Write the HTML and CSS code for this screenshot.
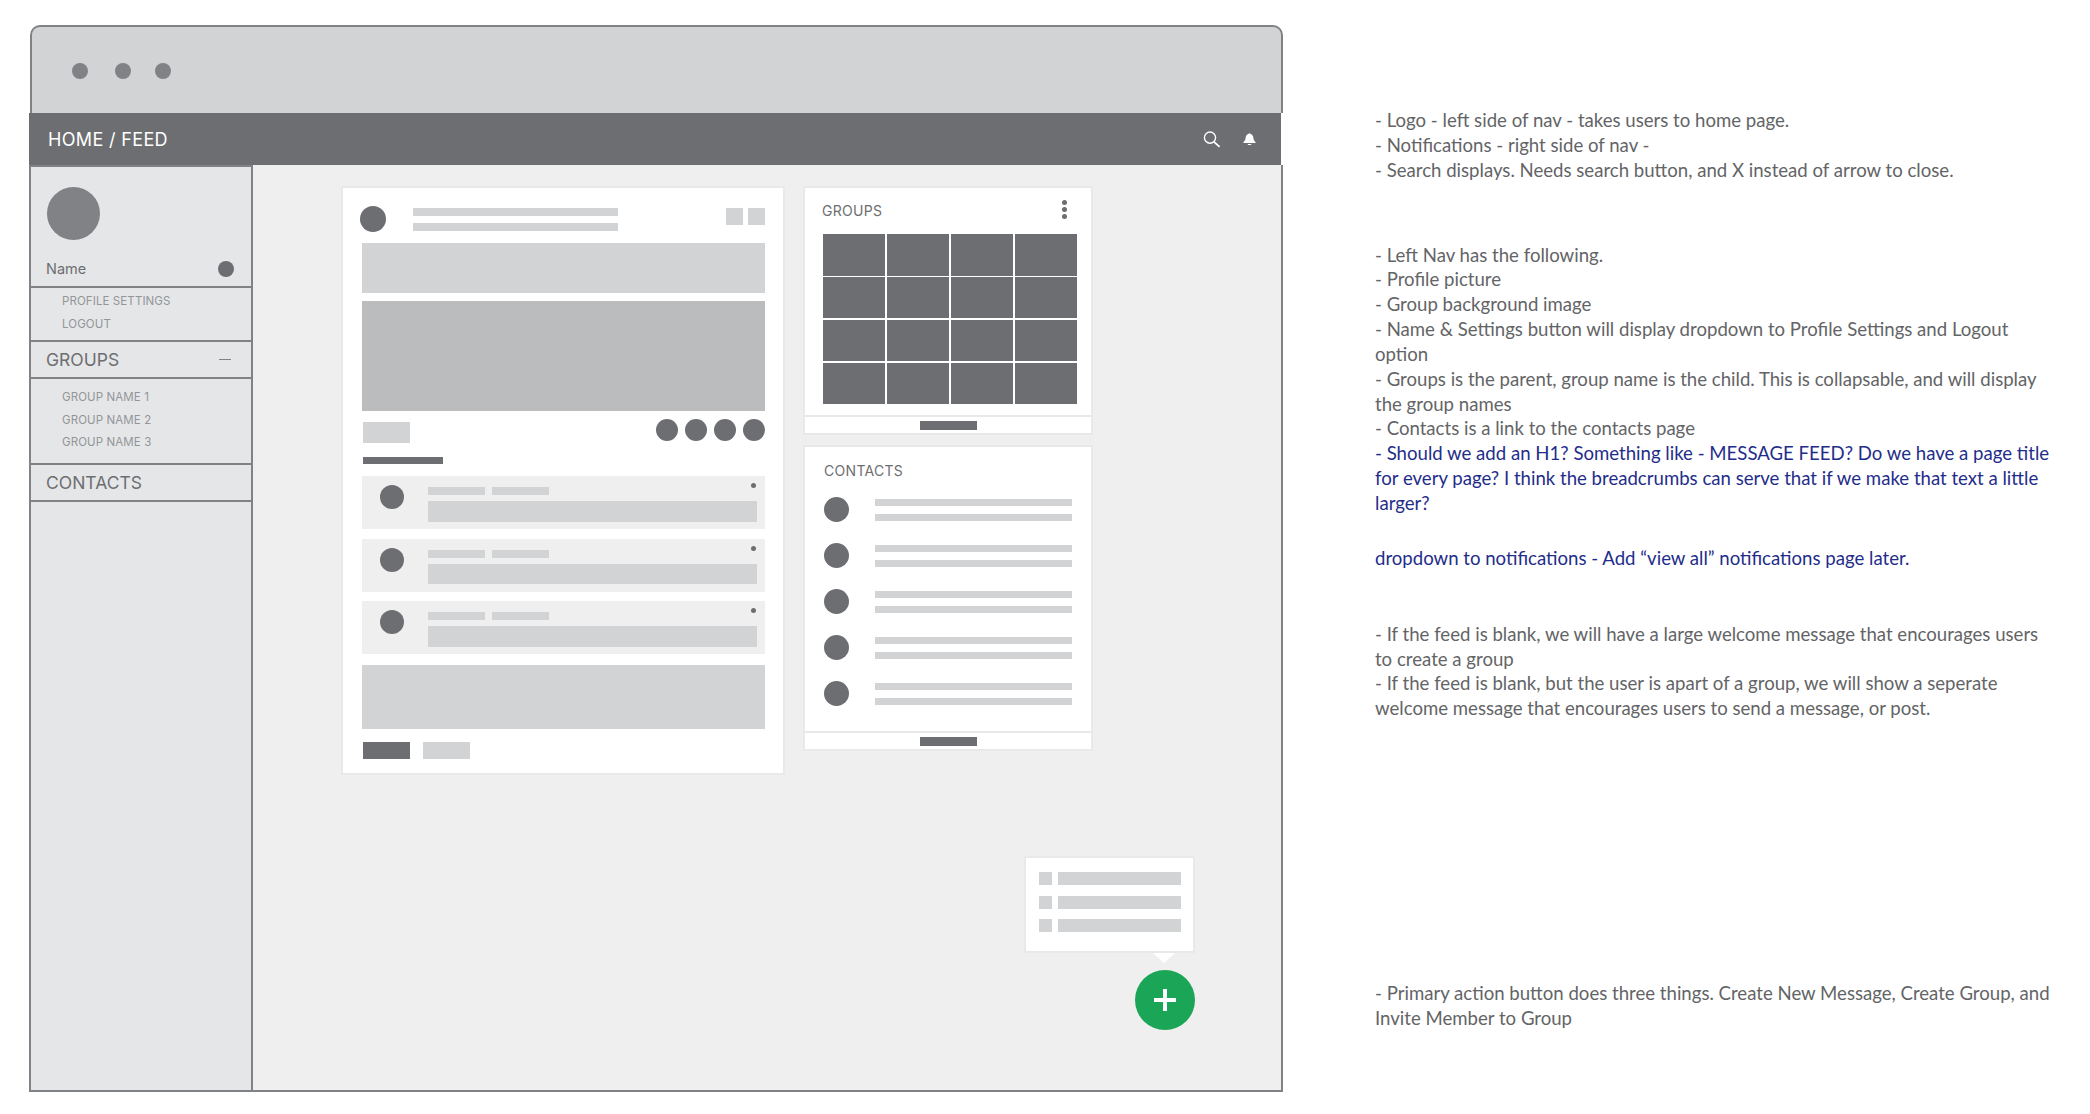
FILE: index.html
```html
<!DOCTYPE html>
<html lang="en">
<head>
	<meta charset="UTF-8">
	<title>Home / Feed wireframe</title>
	<link rel="stylesheet" href="styles.css">
</head>
<body>
	<div class="page">
		<div class="window">
			<div class="titlebar">
				<span class="win-dot"></span>
				<span class="win-dot second"></span>
				<span class="win-dot third"></span>
			</div>
			<div class="topnav">
				<span class="crumbs">HOME / FEED</span>
				<svg class="icon-search" width="18" height="17" viewBox="0 0 18 17"><circle cx="7" cy="6.6" r="5.6" fill="none" stroke="#fff" stroke-width="1.4"/><path d="M11 10.8l5.6 5" fill="none" stroke="#fff" stroke-width="1.8"/></svg>
				<svg class="icon-bell" width="13" height="12" viewBox="0 0 13 12"><path d="M6.5 0.2c.6 0 1 .4 1.1.9 1.8.5 2.6 2 2.8 3.8.2 1.800.8 3 2.1 4.100v1H.5V9c1.300-1.100 1.900-2.300 2.100-4.100.2-1.800 1-3.300 2.800-3.800.1-.5.500-.9 1.100-.9z" fill="#fff"/><path d="M4.800 11h3.400v1H4.800z" fill="#fff"/></svg>
			</div>
			<div class="body-row">
				<div class="sidebar">
					<div class="profile">
						<div class="profile-pic"></div>
						<div class="name-row"><span>Name</span><i class="name-dot"></i></div>
					</div>
					<div class="submenu profile-menu">
						<a>PROFILE SETTINGS</a>
						<a>LOGOUT</a>
					</div>
					<div class="nav-head"><span>GROUPS</span><i class="minus"></i></div>
					<div class="submenu group-menu">
						<a>GROUP NAME 1</a>
						<a>GROUP NAME 2</a>
						<a>GROUP NAME 3</a>
					</div>
					<div class="nav-head"><span>CONTACTS</span></div>
				</div>
				<div class="main">
					<div class="card feed">
						<div class="post-head">
							<div class="post-avatar"></div>
							<div class="post-lines"><div></div><div></div></div>
							<div class="post-tools"><div></div><div></div></div>
						</div>
						<div class="block b1"></div>
						<div class="block b2"></div>
						<div class="post-actions">
							<div class="like"></div>
							<div class="faces"><i></i><i></i><i></i><i></i></div>
						</div>
						<div class="divider-bar"></div>
						<div class="comments">
							<div class="comment">
								<div class="c-avatar"></div>
								<div class="c-body">
									<div class="c-meta"><div></div><div></div><i></i></div>
									<div class="c-text"></div>
								</div>
							</div>
							<div class="comment">
								<div class="c-avatar"></div>
								<div class="c-body">
									<div class="c-meta"><div></div><div></div><i></i></div>
									<div class="c-text"></div>
								</div>
							</div>
							<div class="comment">
								<div class="c-avatar"></div>
								<div class="c-body">
									<div class="c-meta"><div></div><div></div><i></i></div>
									<div class="c-text"></div>
								</div>
							</div>
						</div>
						<div class="block b3"></div>
						<div class="post-btns"><div class="btn-dark"></div><div class="btn-light"></div></div>
					</div>
					<div class="side-cards">
						<div class="card groups-card">
							<div class="card-title">
								<span>GROUPS</span>
								<div class="more"><i></i><i></i><i></i></div>
							</div>
							<div class="tile-grid">
								<div></div><div></div><div></div><div></div>
								<div></div><div></div><div></div><div></div>
								<div></div><div></div><div></div><div></div>
								<div></div><div></div><div></div><div></div>
							</div>
							<div class="card-foot"><div></div></div>
						</div>
						<div class="card contacts-card">
							<div class="card-title contacts-title"><span>CONTACTS</span></div>
							<div class="contact-list">
								<div class="contact"><i></i><div class="contact-lines"><div></div><div></div></div></div>
								<div class="contact"><i></i><div class="contact-lines"><div></div><div></div></div></div>
								<div class="contact"><i></i><div class="contact-lines"><div></div><div></div></div></div>
								<div class="contact"><i></i><div class="contact-lines"><div></div><div></div></div></div>
								<div class="contact"><i></i><div class="contact-lines"><div></div><div></div></div></div>
							</div>
							<div class="card-foot"><div></div></div>
						</div>
					</div>
					<div class="popup">
						<div class="popup-row"><i></i><div></div></div>
						<div class="popup-row"><i></i><div></div></div>
						<div class="popup-row"><i></i><div></div></div>
					</div>
					<div class="fab">
						<svg width="22" height="22" viewBox="0 0 22 22"><path d="M11 0v22M0 11h22" stroke="#fff" stroke-width="4"/></svg>
					</div>
				</div>
			</div>
		</div>
		<div class="notes">
			<p class="n1">- Logo - left side of nav - takes users to home page.<br>
			- Notifications - right side of nav -<br>
			- Search displays. Needs search button, and X instead of arrow to close.</p>
			<p class="n2">- Left Nav has the following.<br>
			- Profile picture<br>
			- Group background image<br>
			- Name &amp; Settings button will display dropdown to Profile Settings and Logout option<br>
			- Groups is the parent, group name is the child. This is collapsable, and will display the group names<br>
			- Contacts is a link to the contacts page<br>
			<span class="blue">- Should we add an H1? Something like - MESSAGE FEED? Do we have a page title for every page? I think the breadcrumbs can serve that if we make that text a little larger?</span></p>
			<p class="n3 blue">dropdown to notifications - Add “view all” notifications page later.</p>
			<p class="n4">- If the feed is blank, we will have a large welcome message that encourages users to create a group<br>
			- If the feed is blank, but the user is apart of a group, we will show a seperate welcome message that encourages users to send a message, or post.</p>
			<p class="n5">- Primary action button does three things. Create New Message, Create Group, and Invite Member to Group</p>
		</div>
	</div>
</body>
</html>
```

FILE: styles.css
```css
*{
	margin:0;
	padding:0;
	box-sizing:border-box;
}
body{
	background:#fff;
	font-family:"Lato","Liberation Sans",sans-serif;
	overflow:hidden;
}
i{
	display:block;
}
.page{
	display:flex;
	padding:25px 0 0 29px;
}

/* window frame */
.window{
	width:1254px;
	height:1067px;
	display:flex;
	flex-direction:column;
	flex:none;
}
.titlebar{
	height:88px;
	margin-left:1px;
	background:#d1d3d4;
	border:2px solid #808285;
	border-bottom:0;
	border-radius:10px 10px 0 0;
	display:flex;
	align-items:center;
	padding:1px 0 0 40px;
}
.win-dot{
	width:16px;
	height:16px;
	border-radius:50%;
	background:#808285;
}
.win-dot.second{
	margin-left:27px;
}
.win-dot.third{
	margin-left:24px;
}
.topnav{
	height:52px;
	margin-right:2px;
	background:#6d6e71;
	display:flex;
	align-items:center;
	padding:0 25px 0 19px;
}
.crumbs{
	font-family:"Inter","Liberation Sans",sans-serif;
	font-size:18px;
	color:#fff;
	letter-spacing:.35px;
}
.icon-search{
	margin-left:auto;
	margin-top:1px;
}
.icon-bell{
	margin-left:22px;
}
.body-row{
	flex:1;
	display:flex;
	min-height:0;
}

/* left nav */
.sidebar{
	width:224px;
	background:#e5e6e8;
	border:2px solid #808285;
	font-family:"Inter","Liberation Sans",sans-serif;
}
.profile{
	height:121px;
	padding:20px 16px 0 16px;
	border-bottom:2px solid #808285;
}
.profile-pic{
	width:53px;
	height:53px;
	border-radius:50%;
	background:#808285;
}
.name-row{
	display:flex;
	align-items:center;
	justify-content:space-between;
	margin-top:20px;
	padding-right:1px;
	font-size:14.500px;
	color:#6d6e71;
}
.name-row span{
	margin-left:-1px;
}
.name-dot{
	width:16px;
	height:16px;
	border-radius:50%;
	background:#6d6e71;
}
.submenu{
	padding-left:31px;
	border-bottom:2px solid #808285;
	font-size:11.500px;
	letter-spacing:.1px;
	color:#939598;
	display:flex;
	flex-direction:column;
}
.profile-menu{
	height:54px;
	padding-top:6px;
	gap:9px;
}
.group-menu{
	height:86px;
	padding-top:11px;
	gap:8.500px;
}
.nav-head{
	height:37px;
	padding:0 20px 0 15px;
	border-bottom:2px solid #808285;
	display:flex;
	align-items:center;
	justify-content:space-between;
	font-size:17.500px;
	color:#6d6e71;
}
.minus{
	width:12px;
	height:1.500px;
	background:#808285;
}

/* content area */
.main{
	flex:1;
	position:relative;
	background:#efefef;
	border-right:2px solid #808285;
	border-bottom:2px solid #808285;
	padding:21px 0 0 88px;
	display:flex;
	align-items:flex-start;
	gap:18px;
}
.card{
	background:#fff;
	border:2px solid #e9e9ea;
}
.feed{
	width:444px;
	height:589px;
	padding:18px 18px 0 19px;
}
.post-head{
	display:flex;
	height:26px;
}
.post-avatar{
	width:26px;
	height:26px;
	margin-left:-2px;
	border-radius:50%;
	background:#6d6e71;
}
.post-lines{
	width:205px;
	margin:2px 0 0 27px;
	display:flex;
	flex-direction:column;
	gap:7px;
}
.post-lines div{
	height:8px;
	background:#d1d3d4;
}
.post-tools{
	margin:2px 0 0 auto;
	display:flex;
	gap:5px;
}
.post-tools div{
	width:17px;
	height:17px;
	background:#d1d3d4;
}
.block{
	background:#d1d3d4;
}
.b1{
	height:50px;
	margin-top:11px;
}
.b2{
	height:110px;
	margin-top:8px;
	background:#bbbcbe;
}
.post-actions{
	display:flex;
	justify-content:space-between;
	height:24px;
	margin-top:8px;
}
.like{
	width:47px;
	height:21px;
	margin:3px 0 0 1px;
	background:#d1d3d4;
}
.faces{
	display:flex;
	gap:7px;
}
.faces i{
	width:22px;
	height:22px;
	border-radius:50%;
	background:#6d6e71;
}
.divider-bar{
	width:80px;
	height:7px;
	margin:14px 0 0 1px;
	background:#6d6e71;
}
.comments{
	margin-top:12px;
	display:flex;
	flex-direction:column;
	gap:9.500px;
}
.comment{
	height:53px;
	background:#efefef;
	padding:9px 8px 0 18px;
	display:flex;
}
.c-avatar{
	width:24px;
	height:24px;
	border-radius:50%;
	background:#6d6e71;
}
.c-body{
	flex:1;
	margin-left:24px;
}
.c-meta{
	display:flex;
	gap:7px;
	height:8px;
	margin-top:2px;
}
.c-meta div{
	width:57px;
	background:#d1d3d4;
}
.c-meta i{
	width:5px;
	height:5px;
	margin:-4px 1px 0 auto;
	border-radius:50%;
	background:#6d6e71;
}
.c-text{
	height:20.500px;
	margin-top:6px;
	background:#d1d3d4;
}
.b3{
	height:63.500px;
	margin-top:11px;
}
.post-btns{
	display:flex;
	gap:13px;
	margin:13.500px 0 0 1px;
}
.post-btns div{
	width:47px;
	height:17px;
}
.btn-dark{
	background:#6d6e71;
}
.btn-light{
	background:#d1d3d4;
}

/* right cards */
.side-cards{
	width:290px;
	display:flex;
	flex-direction:column;
	gap:10px;
}
.card-title{
	display:flex;
	justify-content:space-between;
	align-items:center;
	font-family:"Inter","Liberation Sans",sans-serif;
	font-size:14px;
	letter-spacing:.3px;
	color:#6d6e71;
}
.groups-card .card-title{
	height:28px;
	margin-top:8px;
	padding:0 24px 0 17px;
}
.more i{
	width:5px;
	height:5px;
	margin-bottom:2px;
	border-radius:50%;
	background:#6d6e71;
}
.tile-grid{
	display:grid;
	grid-template-columns:repeat(4,1fr);
	gap:1.300px 1.700px;
	width:254px;
	margin:10px 0 0 18px;
}
.tile-grid div{
	height:41.600px;
	background:#6d6e71;
}
.card-foot{
	height:18px;
	border-top:2px solid #e9e9ea;
	display:flex;
	justify-content:center;
	padding-top:4px;
}
.card-foot div{
	width:57px;
	height:9px;
	background:#6d6e71;
}
.groups-card .card-foot{
	margin-top:10.700px;
}
.contacts-title{
	height:20px;
	margin-top:14px;
	padding-left:19px;
}
.contact-list{
	padding:16px 19px 0 19px;
	height:250px;
	display:flex;
	flex-direction:column;
	gap:21px;
}
.contact{
	display:flex;
	height:25px;
}
.contact i{
	width:25px;
	height:25px;
	border-radius:50%;
	background:#6d6e71;
}
.contact-lines{
	flex:1;
	margin:2px 0 0 26px;
	display:flex;
	flex-direction:column;
	gap:8px;
}
.contact-lines div{
	height:7px;
	background:#d1d3d4;
}

/* action menu, sits over the content */
.popup{
	position:absolute;
	right:86px;
	bottom:137px;
	width:171px;
	height:97px;
	background:#fff;
	border:2px solid #e9e9ea;
	padding:14px 12px 0 13px;
	display:flex;
	flex-direction:column;
	gap:10.500px;
}
.popup:after{
	content:"";
	position:absolute;
	right:18px;
	bottom:-12px;
	border-left:11px solid transparent;
	border-right:11px solid transparent;
	border-top:10px solid #fff;
}
.popup-row{
	display:flex;
	gap:6px;
	height:13px;
}
.popup-row i{
	width:13px;
	background:#d1d3d4;
}
.popup-row div{
	flex:1;
	background:#d1d3d4;
}
.fab{
	position:absolute;
	right:86px;
	bottom:60px;
	width:60px;
	height:60px;
	border-radius:50%;
	background:#1ba557;
	display:flex;
	align-items:center;
	justify-content:center;
}

/* notes column */
.notes{
	width:680px;
	margin-left:92px;
	font-size:18.600px;
	line-height:24.850px;
	color:#636466;
}
.blue{
	color:#1f2d8a;
}
.n1{
	margin-top:83px;
}
.n2{
	margin-top:60px;
}
.n3{
	margin-top:30px;
}
.n4{
	margin-top:51px;
}
.n5{
	margin-top:260px;
}
```
